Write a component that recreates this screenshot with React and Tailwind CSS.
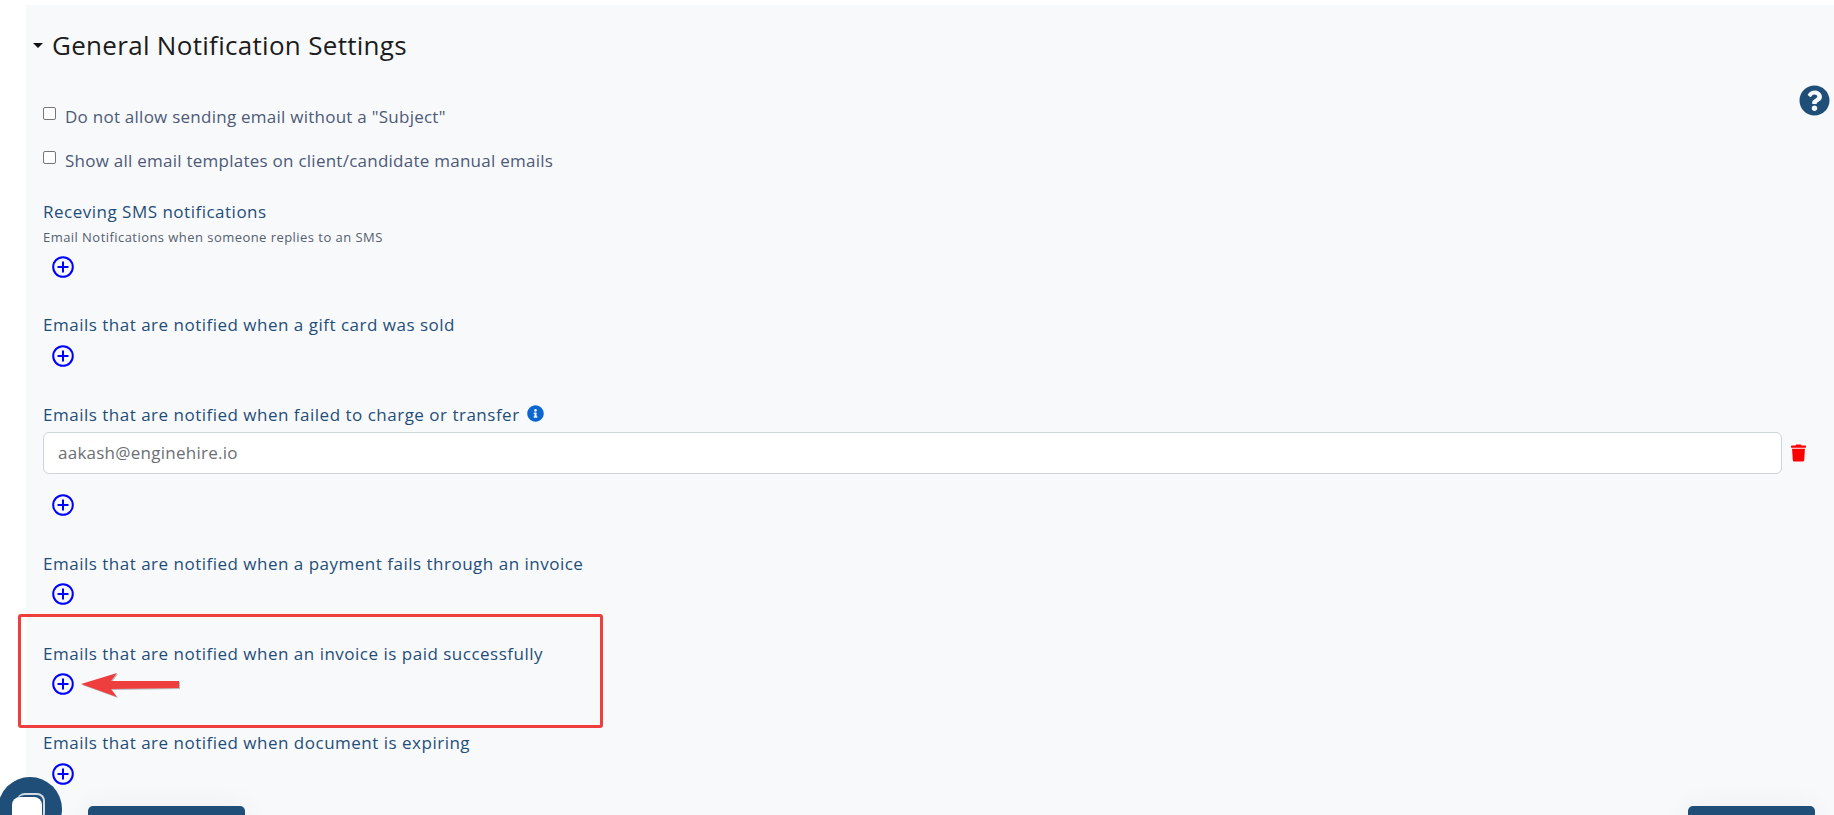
import React from "react";
import { FaQuestionCircle, FaTrash, FaInfoCircle } from "react-icons/fa";

const Plus = () => (
  <svg viewBox="0 0 22 22" className="w-[22px] h-[22px] ml-[9px] block" fill="none" stroke="#0000ff" strokeWidth="2">
    <circle cx="11" cy="11" r="9.8" />
    <path d="M11 5.5v11M5.5 11h11" />
  </svg>
);

const Label = ({ children }) => (
  <div className="h-6 leading-6 text-[17px] font-medium text-[#1f4e79] tracking-[0.5px]">{children}</div>
);

const Check = ({ text }) => (
  <label className="flex items-start h-6">
    <input type="checkbox" className="w-[13px] h-[13px] mt-[2px] appearance-none border border-[#767676] rounded-[2px] bg-white" />
    <span className="ml-[9px] leading-6 text-[17px] text-[#4d5a78] tracking-[0.25px]">{text}</span>
  </label>
);

export default function App() {
  return (
    <div className="relative h-[815px] overflow-hidden bg-white font-['Open_Sans','Noto_Sans',sans-serif]">
      <div className="ml-[26px] mt-[5px] h-[810px] bg-[#f8f9fb] pl-[17px] pt-[22px]">
        <div className="flex items-center h-9 -ml-[10px]">
          <span className="w-0 h-0 border-x-[5px] border-x-transparent border-t-[5px] border-t-[#111]" />
          <h2 className="ml-[9px] text-[26px] leading-9 text-[#1c1c1c] tracking-[0.3px]">General Notification Settings</h2>
        </div>

        <div className="mt-[42px] flex flex-col gap-5">
          <Check text={'Do not allow sending email without a "Subject"'} />
          <Check text="Show all email templates on client/candidate manual emails" />
        </div>

        <div className="mt-[27px]">
          <Label>Receving SMS notifications</Label>
          <div className="mt-[4px] text-[13px] leading-[18px] text-[#55606f] tracking-[0.45px]">Email Notifications when someone replies to an SMS</div>
          <div className="mt-[10px]"><Plus /></div>
        </div>

        <div className="mt-[35px]">
          <Label>Emails that are notified when a gift card was sold</Label>
          <div className="mt-2"><Plus /></div>
        </div>

        <div className="mt-[36px]">
          <div className="flex items-start">
            <Label>Emails that are notified when failed to charge or transfer</Label>
            <FaInfoCircle className="ml-[7px] mt-[2px] text-[#0b66d0] w-[17px] h-[17px]" />
          </div>
          <div className="mt-[5px] flex items-center pr-[28px]">
            <div className="flex-1 h-[42px] px-[14px] flex items-center bg-white border border-[#ced4da] rounded-[6px] text-[17px] text-[#6c6f75] tracking-[0.25px]">
              aakash@enginehire.io
            </div>
            <FaTrash className="ml-[9px] w-[15px] h-[20px] text-[#ff0000]" />
          </div>
          <div className="mt-[20px]"><Plus /></div>
        </div>

        <div className="mt-[36px]">
          <Label>Emails that are notified when a payment fails through an invoice</Label>
          <div className="mt-[7px]"><Plus /></div>
        </div>

        <div className="mt-[37px]">
          <Label>Emails that are notified when an invoice is paid successfully</Label>
          <div className="mt-[7px]"><Plus /></div>
        </div>

        <div className="mt-[36px]">
          <Label>Emails that are notified when document is expiring</Label>
          <div className="mt-[8px]"><Plus /></div>
        </div>

        <div className="mt-[21px] flex justify-between pl-[45px] pr-[19px]">
          <div className="w-[157px] h-10 rounded-[5px] bg-[#1f4e79] shadow-[0_0_30px_rgba(0,0,0,0.05)]" />
          <div className="w-[127px] h-10 rounded-[5px] bg-[#1f4e79] shadow-[0_0_30px_rgba(0,0,0,0.05)]" />
        </div>
      </div>

      <FaQuestionCircle className="absolute left-[1799px] top-[85px] w-[31px] h-[31px] text-[#1f4e79]" />

      {/* annotation */}
      <div className="absolute left-[18px] top-[614px] w-[585px] h-[114px] border-[3px] border-[#ef3e3e] rounded-[3px]" />
      <svg className="absolute left-[80px] top-[668px] drop-shadow-[1px_1px_0_rgba(0,0,0,0.25)]" width="102" height="34" viewBox="0 0 102 34">
        <path d="M1 16 L37 5 L31 13 L99 13 L99 20 L31 21 L37 29 Z" fill="#ef3e3e" />
      </svg>

      {/* chat bubble */}
      <div className="absolute -left-[2px] top-[777px] w-[64px] h-[64px] rounded-full bg-[#1f4e79] overflow-hidden">
        <div className="absolute left-[14px] top-[20px] w-[30px] h-[30px] rounded-[8px] bg-white" />
        <div className="absolute left-[19px] top-[16px] w-[28px] h-[28px] rounded-[8px] border-t-2 border-r-2 border-white/80" />
      </div>
    </div>
  );
}
